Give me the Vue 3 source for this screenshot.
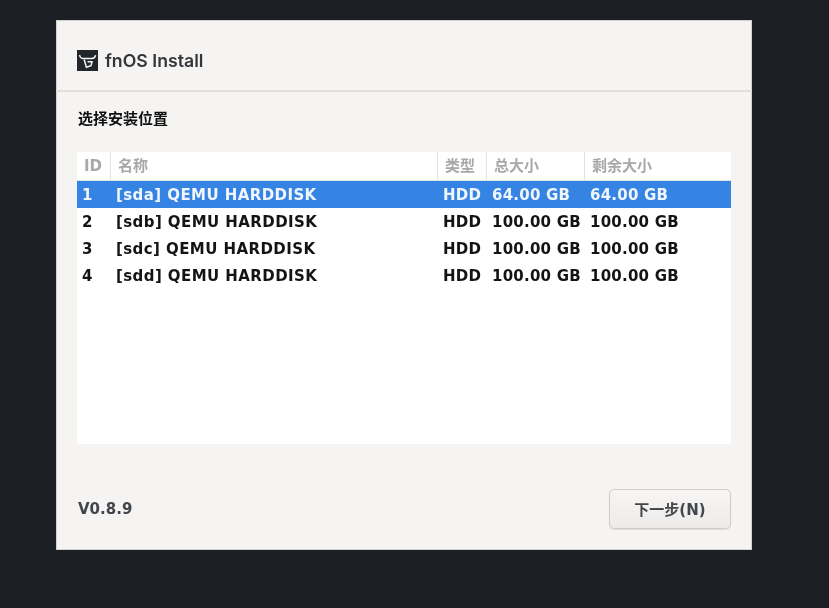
<script setup>
const columns = ['ID', '名称', '类型', '总大小', '剩余大小']
const disks = [
  { id: 1, name: '[sda] QEMU HARDDISK', type: 'HDD', total: '64.00 GB', free: '64.00 GB', selected: true },
  { id: 2, name: '[sdb] QEMU HARDDISK', type: 'HDD', total: '100.00 GB', free: '100.00 GB' },
  { id: 3, name: '[sdc] QEMU HARDDISK', type: 'HDD', total: '100.00 GB', free: '100.00 GB' },
  { id: 4, name: '[sdd] QEMU HARDDISK', type: 'HDD', total: '100.00 GB', free: '100.00 GB' }
]
</script>

<template>
  <div class="screen">
    <main class="window">
      <header class="head">
        <svg class="logo" viewBox="0 0 21 21" aria-hidden="true">
          <rect width="21" height="21" fill="#23272b" />
          <path d="M2.6 5c.3 2.3 1.6 3.5 3.8 3.5h8.4c2 0 3.3-1.1 3.8-3.4" fill="none" stroke="#f4f3f1" stroke-width="1.5" />
          <path d="M7.2 9.5 9.4 17.3l4.6-1.6 1-4H10.6" fill="none" stroke="#f4f3f1" stroke-width="1.5" />
        </svg>
        <span class="title">fnOS Install</span>
      </header>
      <section class="body">
        <h1 class="heading">选择安装位置</h1>
        <div class="table">
          <div class="row header">
            <div v-for="c in columns" :key="c" class="th">{{ c }}</div>
          </div>
          <div v-for="d in disks" :key="d.id" class="row item" :class="{ selected: d.selected }">
            <div class="td first">{{ d.id }}</div>
            <div class="td name">{{ d.name }}</div>
            <div class="td">{{ d.type }}</div>
            <div class="td">{{ d.total }}</div>
            <div class="td">{{ d.free }}</div>
          </div>
        </div>
        <footer class="foot">
          <span class="version">V0.8.9</span>
          <button class="next" type="button">下一步(N)</button>
        </footer>
      </section>
    </main>
  </div>
</template>

<style>
html, body { margin: 0; background: #1b1f24; }
</style>

<style scoped>
.screen {
  width: 829px;
  height: 608px;
  box-sizing: border-box;
  padding: 20px 0 0 56px;
  background: #1b1f24;
  overflow: hidden;
  font-family: "DejaVu Sans", "Noto Sans CJK SC", sans-serif;
  filter: blur(0.35px);
}
.window {
  width: 696px;
  height: 530px;
  background: #f5f4f2;
  box-shadow: inset 0 0 0 1px #d3d1cd;
  display: flex;
  flex-direction: column;
}
.head {
  box-sizing: border-box;
  border-bottom: 2px solid #e1dfdc;
  height: 72px;
  padding: 30px 0 0 21px;
  display: flex;
  align-items: flex-start;
  gap: 7px;
}
.logo { width: 21px; height: 21px; flex: none; }
.title {
  font-family: Inter, "Liberation Sans", sans-serif;
  font-size: 17.7px;
  font-weight: 600;
  line-height: 21px;
  color: #33373b;
}
.body {
  flex: 1;
  padding: 0 21px;
  display: flex;
  flex-direction: column;
}
.heading {
  margin: 16px 0 0 1px;
  font-size: 15px;
  font-weight: 700;
  line-height: 19px;
  color: #111;
  font-family: "Noto Sans CJK SC", sans-serif;
}
.table {
  margin-top: 25px;
  height: 292px;
  background: #fff;
}
.row {
  display: grid;
  grid-template-columns: 34px 327px 49px 98px 1fr;
}
.header { border-bottom: 1px solid #e4e2df; height: 28px; }
.th {
  box-sizing: border-box;
  padding-left: 7px;
  border-right: 1px solid #e4e2df;
  font-size: 15px;
  font-weight: 700;
  line-height: 28px;
  color: #a8a8a8;
}
.th:last-child { border-right: 0; }
.item { height: 27px; }
.td {
  padding: 1px 0 0 5px;
  font-size: 15px;
  font-weight: 700;
  line-height: 27px;
  letter-spacing: .22px;
  color: #141414;
  white-space: nowrap;
}
.td.name { letter-spacing: .42px; }
.first { padding-left: 5px; }
.selected { background: #3584e4; }
.selected .td { color: #f1f6fd; }
.foot {
  margin-top: 45px;
  display: flex;
  justify-content: space-between;
  align-items: center;
}
.version {
  margin-left: 1px;
  font-size: 15px;
  font-weight: 700;
  color: #41464c;
}
.next {
  width: 122px;
  height: 40px;
  box-sizing: border-box;
  border: 1px solid #cfcbc6;
  border-radius: 5px;
  background: linear-gradient(#f7f6f5, #edebe9);
  box-shadow: 0 1px 1px rgba(0, 0, 0, .08);
  font-family: "DejaVu Sans", "Noto Sans CJK SC", sans-serif;
  font-size: 15px;
  font-weight: 700;
  color: #43474c;
  padding: 0 0 2px;
}
</style>
